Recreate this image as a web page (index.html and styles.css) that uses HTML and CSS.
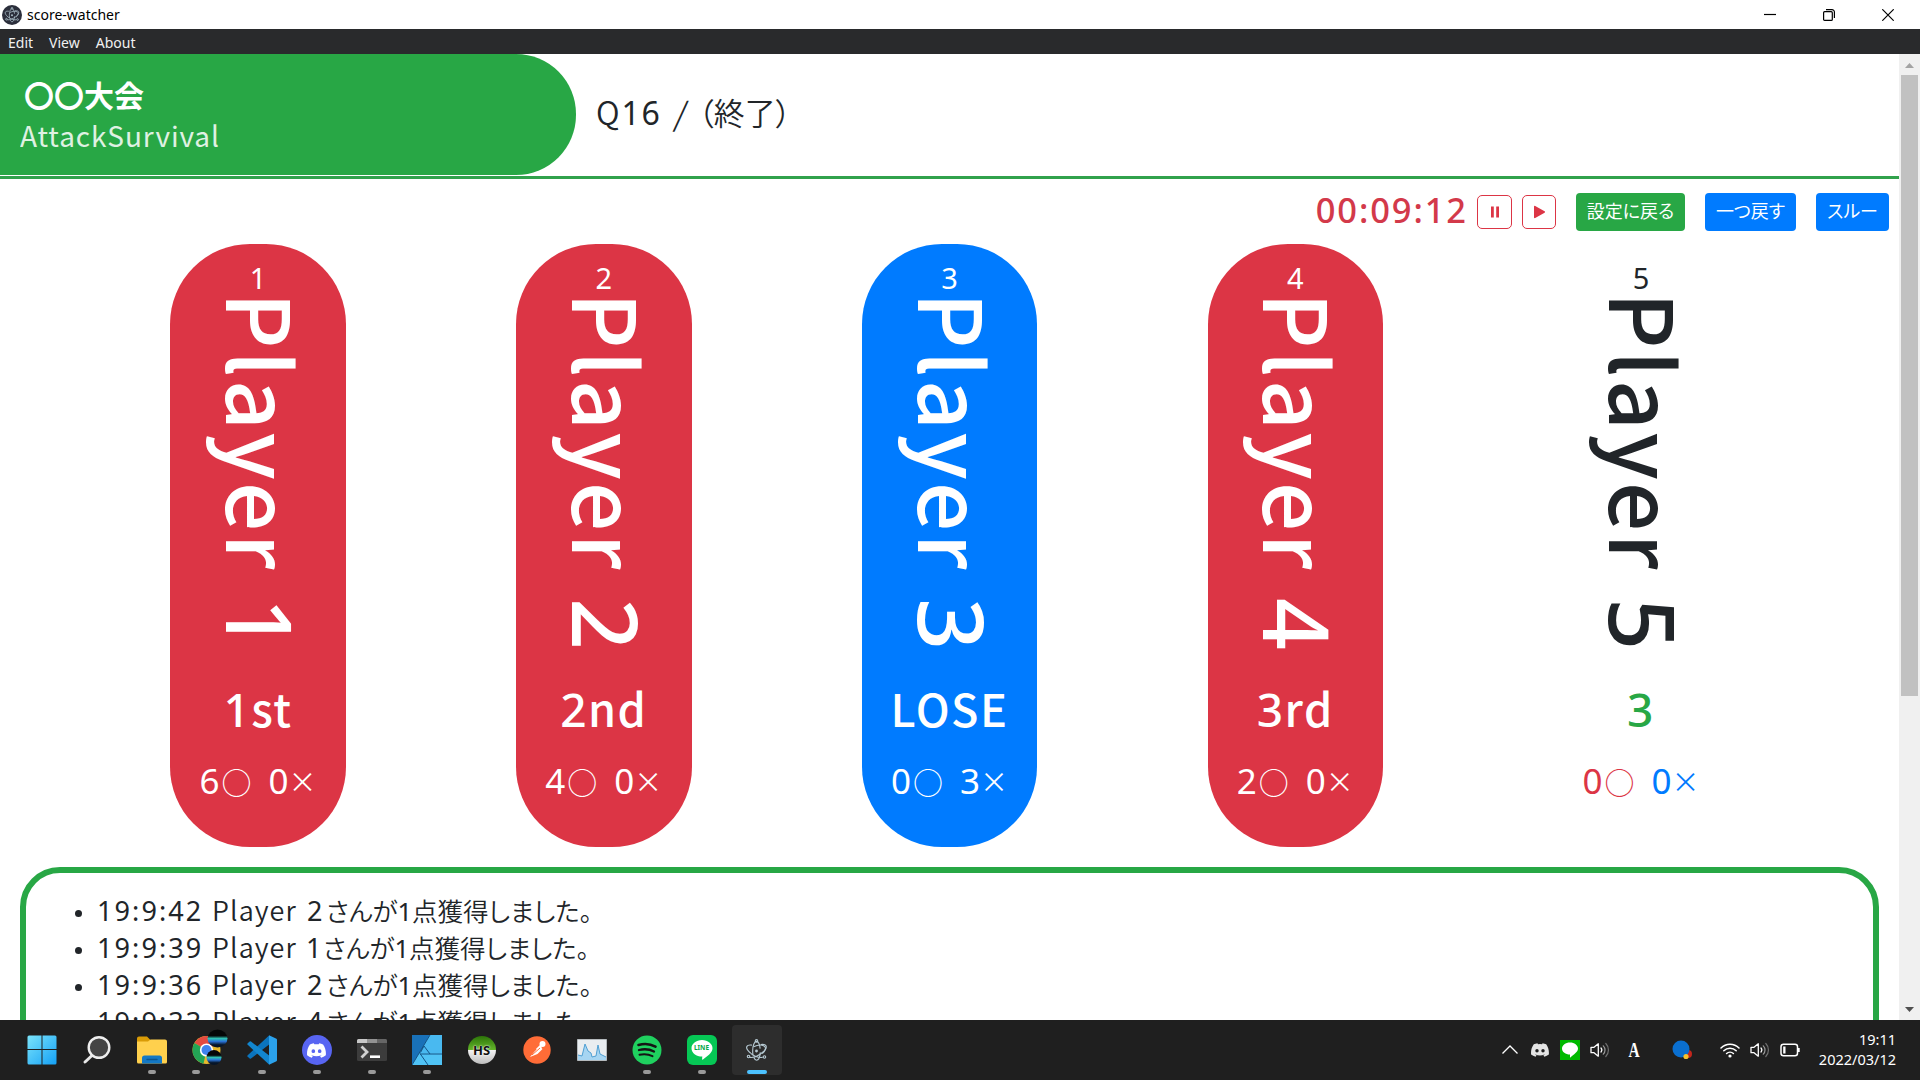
FILE: index.html
```html
<!DOCTYPE html>
<html lang="ja">
<head>
<meta charset="utf-8">
<title>score-watcher</title>
<link rel="stylesheet" href="styles.css">
</head>
<body>
<svg class="defs" width="0" height="0">
  <symbol id="electron" viewBox="0 0 24 24"><g fill="none" stroke="currentColor" stroke-width="1.2"><path d="M7.2 6.400C4.500 6 2.600 6.500 2 7.700c-.9 1.700.9 4.700 4 7.200"/><path d="M9 8.200c3.700-1.900 8-2.400 10.800-.9 2.900 1.500 1.500 5.100-1.800 8"/><path d="M6 15c3.600 2.900 8.600 4.800 12.400 4.200"/><path d="M9.200 19.300c.8 1.800 1.800 2.900 2.900 2.900 2 0 3.500-3.500 3.900-8.200"/><path d="M15.800 10c-.5-4.500-2-7.500-3.800-7.500-2.300 0-4 4.500-4 10.200 0 1.500.1 2.900.3 4.100"/><path d="M16.500 5.800c2.800-.5 4.800.1 5.400 1.300.9 1.800-.9 4.700-4.100 7.300-4 3.200-9.700 5.400-13 4.800"/><circle cx="12" cy="2" r="1.300"/><circle cx="20.300" cy="18.800" r="1.300"/><circle cx="3.700" cy="18.300" r="1.300"/></g><circle cx="12" cy="12.500" r="1.500" fill="currentColor"/></symbol>
  <symbol id="discord" viewBox="0 0 24 24"><path fill="currentColor" fill-rule="evenodd" d="M20.300 4.400A19.800 19.800 0 0 0 15.400 2.900l-.6 1.300a18.300 18.300 0 0 0-5.500 0L8.600 2.900a19.700 19.700 0 0 0-4.900 1.500C.500 9-.300 13.600.100 18.100a19.900 19.900 0 0 0 6 3l1.300-2-1.900-.9.400-.3a14.200 14.200 0 0 0 12.100 0l.4.300-1.900.9 1.300 2a19.800 19.800 0 0 0 6-3c.5-5.200-.8-9.700-3.500-13.700zM8 15.300a2.300 2.400 0 1 1 0-4.800 2.300 2.400 0 0 1 0 4.800zm8 0a2.300 2.400 0 1 1 0-4.800 2.300 2.400 0 0 1 0 4.800z"/></symbol>
  <symbol id="bubble" viewBox="0 0 20 20"><path fill="#fff" d="M10 2.500c4.400 0 8 2.700 8 6 0 3.400-4 5.800-8 9.300v-3.200c-4.400 0-8-2.700-8-6.100 0-3.300 3.600-6 8-6z"/></symbol>
  <symbol id="speaker" viewBox="0 0 20 20"><path d="M1 7.300h3L8.300 3.800v12.400L4 12.700H1z" fill="none" stroke="#fff" stroke-width="1.300" stroke-linejoin="round"/><g fill="none" stroke-linecap="round" stroke-width="1.200"><path d="M11 8a3 3 0 0 1 0 4" stroke="#fff"/><path d="M13.300 5.800a6 6 0 0 1 0 8.400" stroke="#999"/><path d="M15.800 3.500a9.300 9.300 0 0 1 0 13" stroke="#707070"/></g></symbol>
</svg>

<header class="titlebar">
  <span class="app-badge"><svg width="16" height="16"><use href="#electron"/></svg></span>
  <span class="app-name">score-watcher</span>
  <div class="win-controls">
    <svg viewBox="0 0 12 12"><path d="M0 5.500h12"/></svg>
    <svg viewBox="0 0 12 12"><rect x=".6" y="2.700" width="8.700" height="8.700" rx="1"/><path d="M3 .6h6a2.400 2.400 0 0 1 2.400 2.400v6"/></svg>
    <svg viewBox="0 0 12 12"><path d="M.3.3l11.400 11.400M11.700.3L.3 11.700"/></svg>
  </div>
</header>
<nav class="menubar"><span>Edit</span><span>View</span><span>About</span></nav>

<div class="viewport">
  <main class="page">
    <section class="heading">
      <div class="contest">
        <div class="contest-name">〇〇大会</div>
        <div class="contest-rule">AttackSurvival</div>
      </div>
      <div class="question"><span class="qno">Q<span class="num">16</span></span><span class="slash">/</span><span class="qtext">（終了）</span></div>
    </section>

    <section class="toolbar">
      <span class="timer num">00:09:12</span>
      <button class="btn-timer pause"><svg viewBox="0 0 16 16"><path d="M4 2.500h2.800v11H4zM9.200 2.500H12v11H9.200z"/></svg></button>
      <button class="btn-timer play"><svg viewBox="0 0 16 16"><path d="M3 2.600c0-.7.600-1 1.200-.7l9.400 5.400c.6.300.6 1.100 0 1.400l-9.400 5.400c-.6.300-1.200 0-1.200-.7z"/></svg></button>
      <button class="btn success">設定に戻る</button>
      <button class="btn primary undo">一つ戻す</button>
      <button class="btn primary through">スルー</button>
    </section>

    <section class="players">
      <article class="player win"><div class="no num">1</div><div class="name">Player <i class="num">1</i></div><div class="state"><span class="num">1</span>st</div><div class="count"><span class="ok num">6<b>○</b></span><span class="ng num">0<b>×</b></span></div></article>
      <article class="player win"><div class="no num">2</div><div class="name">Player <i class="num">2</i></div><div class="state"><span class="num">2</span>nd</div><div class="count"><span class="ok num">4<b>○</b></span><span class="ng num">0<b>×</b></span></div></article>
      <article class="player lose"><div class="no num">3</div><div class="name">Player <i class="num">3</i></div><div class="state">LOSE</div><div class="count"><span class="ok num">0<b>○</b></span><span class="ng num">3<b>×</b></span></div></article>
      <article class="player win"><div class="no num">4</div><div class="name">Player <i class="num">4</i></div><div class="state"><span class="num">3</span>rd</div><div class="count"><span class="ok num">2<b>○</b></span><span class="ng num">0<b>×</b></span></div></article>
      <article class="player"><div class="no num">5</div><div class="name">Player <i class="num">5</i></div><div class="state"><span class="num">3</span></div><div class="count"><span class="ok num">0<b>○</b></span><span class="ng num">0<b>×</b></span></div></article>
    </section>

    <ul class="log">
      <li><span class="time num">19:9:42</span><span class="who">Player</span><span class="id num">2</span><span class="what">さんが<span class="num">1</span>点獲得しました。</span></li>
      <li><span class="time num">19:9:39</span><span class="who">Player</span><span class="id one num">1</span><span class="what">さんが<span class="num">1</span>点獲得しました。</span></li>
      <li><span class="time num">19:9:36</span><span class="who">Player</span><span class="id num">2</span><span class="what">さんが<span class="num">1</span>点獲得しました。</span></li>
      <li><span class="time num">19:9:33</span><span class="who">Player</span><span class="id num">4</span><span class="what">さんが<span class="num">1</span>点獲得しました。</span></li>
    </ul>
  </main>
  <aside class="scrollbar">
    <svg width="9" height="5" viewBox="0 0 9 5"><path fill="#a3a3a3" d="M0 5L4.500 0 9 5z"/></svg>
    <div class="thumb"></div>
    <svg class="down" width="9" height="5" viewBox="0 0 9 5"><path fill="#505050" d="M0 0h9L4.500 5z"/></svg>
  </aside>
</div>

<footer class="taskbar">
  <div class="apps">
    <div class="app"><svg viewBox="0 0 30 30"><defs><linearGradient id="win" x1="0" y1="0" x2="1" y2="1"><stop offset="0" stop-color="#7be4fb"/><stop offset="1" stop-color="#14a0f5"/></linearGradient></defs><path fill="url(#win)" d="M2 .500h12.500V14H.500V2A1.500 1.500 0 0 1 2 .500zM15.500.500H28A1.500 1.500 0 0 1 29.500 2v12h-14zM.500 15h14v14.500H2A1.500 1.500 0 0 1 .500 28zM15.500 15h14v13a1.500 1.500 0 0 1-1.500 1.500H15.500z"/></svg></div>
    <div class="app"><svg viewBox="0 0 30 30"><path d="M10 20.500L3 27" stroke="#e8e8e8" stroke-width="3" stroke-linecap="round"/><circle cx="17" cy="12.500" r="10.300" fill="#454545" stroke="#eee" stroke-width="2.400"/></svg></div>
    <div class="app run"><svg viewBox="0 0 30 30"><path fill="#d99b06" d="M0 3.500A2 2 0 0 1 2 1.500h8l3 3v5H0z"/><path fill="#ffd04d" d="M0 6.500h11l2.500-2H28a2 2 0 0 1 2 2v20.500a1.500 1.500 0 0 1-1.500 1.500h-27A1.500 1.500 0 0 1 0 27z"/><path fill="#1478c4" d="M5 28.500V23a2.500 2.500 0 0 1 2.500-2.500h15A2.500 2.500 0 0 1 25 23v5.500z"/><path stroke="#0b5590" stroke-width="1.400" stroke-linecap="round" d="M10 24.500h10"/></svg></div>
    <div class="app run multi"><svg viewBox="0 0 30 30" overflow="visible"><defs><linearGradient id="sky" x1="0" y1="0" x2="0" y2="1"><stop offset=".35" stop-color="#050708"/><stop offset=".5" stop-color="#2fc0b4"/><stop offset=".66" stop-color="#2b74d8"/><stop offset=".85" stop-color="#071528"/></linearGradient></defs><circle cx="14.500" cy="15" r="14" fill="#e8b92d"/><path fill="#e34a40" d="M14.500 15L2.400 8A14 14 0 0 1 26.600 8z"/><path fill="#23a455" d="M14.500 15l-3 13.700A14 14 0 0 1 2.400 8z"/><circle cx="14.500" cy="15" r="6.600" fill="#fff"/><circle cx="14.500" cy="15" r="5" fill="#3f83ee"/><ellipse cx="25.500" cy="3.500" rx="10" ry="9" fill="url(#sky)"/><circle cx="22" cy="22.500" r="7.500" fill="url(#sky)"/></svg></div>
    <div class="app run"><svg viewBox="0 0 30 30"><path fill="#0b74bd" d="M22 .500L24 8 4 23.500a1 1 0 0 1-1.300 0l-2-1.700a1 1 0 0 1 0-1.500z"/><path fill="#1286cf" d="M22 29.500l2-7.500L4 6.500a1 1 0 0 0-1.300 0l-2 1.700a1 1 0 0 0 0 1.500z"/><path fill="#2ba2ec" d="M22 .300l7 3.200a1.500 1.500 0 0 1 1 1.500v20a1.500 1.500 0 0 1-1 1.500l-7 3.200z"/></svg></div>
    <div class="app run"><svg viewBox="0 0 30 30"><circle cx="15" cy="15" r="15" fill="#5865f2"/></svg><svg class="over-white" viewBox="0 0 24 24"><use href="#discord"/></svg></div>
    <div class="app run"><svg viewBox="0 0 30 30"><rect y="4" width="30" height="22" rx="1.500" fill="#3c3c3c"/><path fill="#c7c7c7" d="M1.500 4H10v4H0V5.500A1.500 1.500 0 0 1 1.500 4z"/><path fill="#929292" d="M10 4h10v4H10z"/><path fill="#666" d="M20 4h8.500A1.500 1.500 0 0 1 30 5.500V8H20z"/><path d="M4.500 11.500l5.500 5.500-5.500 5.500" fill="none" stroke="#d0d0d0" stroke-width="2.800"/><path d="M13 21.700h10" stroke="#fff" stroke-width="2.600"/></svg></div>
    <div class="app run"><svg viewBox="0 0 30 30"><path fill="#50c3f5" d="M0 0h30v30H0z"/><path fill="#1971b8" d="M0 0h18L0 30z"/><path fill="#49b9f0" d="M8 18L18 0h12v18z"/><path d="M0 30L18 0M8 18.500L16 30M8 19h22M8.500 17.500L12 11l6 8" fill="none" stroke="#145386" stroke-width="1"/></svg></div>
    <div class="app"><div class="hs">HS</div></div>
    <div class="app"><svg viewBox="0 0 30 30"><circle cx="15" cy="15" r="13.700" fill="#ff6c37"/><path d="M8 22l5-6 5-4.500 2.500 2.500-5 5z" fill="#fff"/><path d="M15 15l4-4" stroke="#fff" stroke-width="3"/><circle cx="20.500" cy="9" r="3" fill="#fff"/><path d="M10 20l8-7" stroke="#ff6c37" stroke-width="1"/></svg></div>
    <div class="app"><svg viewBox="0 0 30 30"><path fill="#e9edf0" stroke="#b5babd" d="M.500 4.500h29v21H.500z"/><path fill="#a6d5f2" d="M1 25v-5l4 1 3-12 3 7 3 2 1 4 4-1 2-11 2 9 6 3v3z"/><path fill="none" stroke="#4f9fd3" d="M1 20l4 1 3-12 3 7 3 2 1 4 4-1 2-11 2 9 6 3"/></svg></div>
    <div class="app run"><svg viewBox="0 0 30 30"><circle cx="15" cy="15" r="14.500" fill="#1fd15f"/><g fill="none" stroke="#151515" stroke-linecap="round"><path d="M6.500 10c6-1.700 12-1.100 17 1.700" stroke-width="2.600"/><path d="M7 15c5.500-1.400 10.500-.9 15 1.500" stroke-width="2.300"/><path d="M7.500 19.700c5-1 9-.6 13 1.500" stroke-width="1.900"/></g></svg></div>
    <div class="app run"><svg viewBox="0 0 30 30"><rect width="30" height="30" rx="6" fill="#06c755"/><path fill="#fff" d="M15 5c5.800 0 10.500 3.700 10.500 8.300 0 4.700-5.500 8-9.500 11.200-.6.400-1 .1-.9-.7l.2-2.200C9.200 21.600 4.500 18 4.500 13.300 4.500 8.700 9.200 5 15 5z"/></svg><span class="line-word">LINE</span></div>
    <div class="app run active"><svg class="electron" viewBox="0 0 24 24"><use href="#electron"/></svg></div>
  </div>
  <div class="tray">
    <div class="ti"><svg viewBox="0 0 20 20"><path d="M2.500 13.500L10 6l7.500 7.500" fill="none" stroke="#fff" stroke-width="1.300"/></svg></div>
    <div class="ti dc"><svg viewBox="0 0 24 24"><use href="#discord"/></svg></div>
    <div class="ti ln"><svg viewBox="0 0 20 20"><use href="#bubble"/></svg></div>
    <div class="ti"><svg viewBox="0 0 20 20"><use href="#speaker"/></svg></div>
    <div class="ti ime">A</div>
    <div class="ti ball"><svg viewBox="0 0 20 20"><circle cx="16" cy="14" r="4" fill="#c4261c"/><circle cx="9" cy="9" r="8.500" fill="#0a6fd0"/><circle cx="14" cy="16.500" r="2.600" fill="#f7c22c"/></svg></div>
    <div class="ti"><svg viewBox="0 0 20 20"><g fill="none" stroke="#fff" stroke-width="1.500" stroke-linecap="round"><path d="M1 8a12.700 12.700 0 0 1 18 0M3.800 10.800a8.800 8.800 0 0 1 12.400 0M6.600 13.500a4.900 4.900 0 0 1 6.800 0"/></g><circle cx="10" cy="16" r="1.600" fill="#fff"/></svg></div>
    <div class="ti"><svg viewBox="0 0 20 20"><use href="#speaker"/></svg></div>
    <div class="ti"><svg viewBox="0 0 20 20"><rect x="1" y="4.200" width="16.500" height="11.600" rx="2.500" fill="none" stroke="#fff" stroke-width="1.500"/><path fill="#fff" d="M3.200 6.500h2.300v7H3.200zM18 8h1.700v4H18z"/></svg></div>
    <div class="clock"><div>19:11</div><div>2022/03/12</div></div>
  </div>
</footer>
</body>
</html>
```
FILE: styles.css
```css
* { box-sizing: border-box; }
body {
  margin: 0;
  width: 1920px;
  height: 1080px;
  overflow: hidden;
  display: flex;
  flex-direction: column;
  background: #fff;
  color: #212529;
  font-family: "Noto Sans CJK JP", "Noto Sans", sans-serif;
}
.defs { display: none; }
.num { font-family: "Noto Sans", "Noto Sans CJK JP", sans-serif; font-weight: 400; }

.titlebar {
  height: 29px;
  flex: none;
  display: flex;
  align-items: center;
  padding-left: 2px;
  color: #000;
  font: 14px "Noto Sans", sans-serif;
}
.app-badge {
  width: 20px;
  height: 20px;
  border-radius: 50%;
  background: #2b2e3b;
  color: #a9bcc6;
  display: grid;
  place-items: center;
}
.app-name { margin-left: 5px; }
.win-controls { margin-left: auto; display: flex; gap: 47px; padding-right: 26px; }
.win-controls svg { width: 12px; height: 12px; fill: none; stroke: #000; stroke-width: 1.2; }

.menubar {
  height: 25px;
  flex: none;
  display: flex;
  align-items: center;
  gap: 16px;
  padding: 1px 0 0 8px;
  background: #292a2c;
  color: #f1f1f1;
  font: 14px "Noto Sans", sans-serif;
}

.viewport { flex: 1; min-height: 0; display: flex; overflow: hidden; }
.page { flex: 1; overflow: hidden; }
.heading { display: flex; height: 125px; border-bottom: 3px solid #31a24c; }
.contest {
  width: 576px;
  height: 121px;
  padding: 19px 20px;
  border-radius: 0 60px 60px 0;
  background: #28a745;
  color: #fff;
}
.contest-name { padding-left: 4px; font-size: 30px; font-weight: 700; line-height: 42px; }
.contest-rule { font-size: 28px; line-height: 40px; opacity: .85; letter-spacing: .9px; }
.question { display: flex; align-items: center; padding: 0 0 6px 20px; font-size: 32px; line-height: 48px; font-weight: 350; }
.qno { letter-spacing: 1.800px; }
.slash { margin: 0 11px 0 13px; transform: skewX(-8deg); }
.qtext { font-size: 31px; font-feature-settings: "palt"; }

.toolbar { display: flex; align-items: center; height: 65px; padding-right: 10px; justify-content: flex-end; }
.timer { color: #d3394a; font-size: 34.500px; line-height: 40px; font-weight: 500; letter-spacing: 1.900px; margin: -3px 9px 0 0; }
.btn-timer {
  height: 34px;
  padding: 0;
  border: 1px solid #dc3545;
  border-radius: 5px;
  background: #fff;
  display: grid;
  place-items: center;
}
.btn-timer svg { width: 16px; height: 16px; fill: #dc3545; }
.pause { width: 35px; margin-right: 10px; }
.play { width: 34px; }
.btn {
  height: 38px;
  margin-left: 20px;
  padding: 0 0 4px;
  border: 0;
  border-radius: 4px;
  color: #fff;
  font-family: inherit;
  font-size: 18px;
  font-feature-settings: "palt";
}
.success { width: 109px; background: #28a745; }
.primary { background: #007bff; }
.undo { width: 91px; }
.through { width: 73px; }

.players { display: flex; justify-content: space-evenly; height: 603px; }
.player {
  width: 175.500px;
  border-radius: 80px;
  padding-top: 16px;
  display: flex;
  flex-direction: column;
  align-items: center;
}
.win, .lose { color: #fff; }
.win { background: #dc3545; }
.lose { background: #007bff; }
.no { height: 32px; line-height: 36px; font-size: 29px; }
.name {
  writing-mode: vertical-rl;
  text-orientation: sideways;
  height: 381px;
  margin-left: 12px;
  line-height: 100px;
  font-size: 87px;
  font-weight: 500;
  letter-spacing: 2.700px;
  white-space: pre;
}
.name i { margin-top: 4px; font-style: normal; font-size: 91px; line-height: 0; font-weight: 500; }
.state { height: 70px; line-height: 70px; font-size: 45px; font-weight: 500; letter-spacing: 1.500px; }
.state .num { font-size: 46px; line-height: 0; font-weight: 500; }
.count { display: flex; gap: 17px; margin-top: 8px; line-height: 60px; font-size: 35px; }
.count span { display: flex; }
.count b { font-family: "Noto Sans CJK JP", sans-serif; font-weight: 350; }
.ok b { margin-left: 2px; font-size: 30px; }
.ng b { font-size: 28px; }
.player:not(.win):not(.lose) .state { color: #28a745; }
.player:not(.win):not(.lose) .ok { color: #dc3545; }
.player:not(.win):not(.lose) .ng { color: #007bff; }

.log {
  margin: 20px 20px 0;
  height: 400px;
  padding: 18px 0 0 72px;
  border: 6px solid #28a745;
  border-radius: 40px;
  list-style: none;
  line-height: 37px;
}
.log li { display: flex; align-items: baseline; height: 37px; margin-left: -23px; }
.log li::before { content: ""; align-self: center; flex: none; width: 7px; height: 7px; margin: 7px 15px 0 0; border-radius: 50%; background: #212529; }
.time { width: 115px; font-size: 27px; letter-spacing: 2.100px; }
.who { width: 95px; font-size: 27px; font-weight: 350; letter-spacing: 1.100px; }
.id { width: 19px; font-size: 27px; }
.one { width: 17px; margin-left: -1px; }
.what { font-size: 25.500px; font-weight: 350; font-feature-settings: "palt"; }

.scrollbar { width: 21px; padding-top: 9px; background: #f0f0f0; display: flex; flex-direction: column; align-items: center; }
.thumb { width: 17px; height: 621px; margin-top: 7px; background: #c1c1c1; }
.down { margin: auto 0 8px; }

.taskbar { height: 60px; flex: none; display: flex; justify-content: space-between; background: #1f1f1f; color: #fff; }
.apps { display: flex; padding-left: 14px; }
.app { position: relative; width: 55px; display: grid; place-items: center; }
.app > svg, .hs { grid-area: 1 / 1; width: 30px; height: 30px; }
.app > .over-white { width: 19px; height: 19px; color: #fff; }
.run::after {
  content: "";
  position: absolute;
  left: 24px;
  bottom: 6px;
  width: 8px;
  height: 4px;
  border-radius: 2px;
  background: #9a9a9a;
}
.multi::after { left: 13px; }
.active::before { content: ""; grid-area: 1 / 1; width: 50px; height: 50px; border-radius: 4px; background: #2d2d2d; }
.active::after { left: 18px; width: 20px; background: #4cc2ff; }
.app > .electron { width: 23px; height: 23px; color: #b6c9d2; z-index: 1; }
.hs {
  width: 28px;
  height: 28px;
  border-radius: 50%;
  background: linear-gradient(#2c7408, #65b62b 50%, #f2f2f2 51%, #bdbdbd);
  color: #111;
  font: 700 13px/28px "Noto Sans", sans-serif;
  text-align: center;
  text-shadow: 0 0 1px #fff, 0 0 2px #fff;
}
.line-word { grid-area: 1 / 1; margin-top: -4px; font: 700 6.500px/10px "Noto Sans", sans-serif; color: #06a848; z-index: 1; }

.tray { display: flex; align-items: center; }
.ti { width: 20px; height: 20px; margin-right: 10px; display: grid; place-items: center; }
.ti svg { width: 20px; height: 20px; }
.dc svg { width: 18px; height: 18px; color: #e4e4e4; }
.ln { background: #00b900; }
.ime { width: 28px; height: 24px; margin-right: 24px; font: 700 22px/24px "Liberation Serif", serif; transform: scaleX(.7); }
.ball { margin-right: 28px; }
.clock { width: 78px; margin: -2px 24px 0 8px; text-align: right; font: 14.500px/20px "Noto Sans", sans-serif; white-space: nowrap; }
```
